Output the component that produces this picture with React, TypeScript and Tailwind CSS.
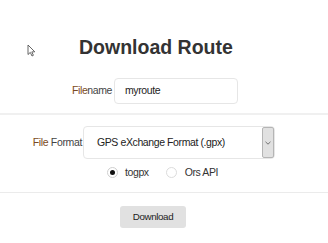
export default function App() {
    return (
        <div
            className="relative h-[243px] w-[328px] overflow-hidden bg-white text-[#444]"
            style={{ fontFamily: '"Liberation Sans", Arial, sans-serif' }}
        >
            {/* mouse pointer */}
            <svg className="absolute left-[27px] top-[44px]" width="9" height="13" viewBox="0 0 9 13">
                <path d="M1 1 L1 10.5 L3.3 8.4 L5 12 L6.4 11.3 L4.8 7.9 L7.8 7.8 Z" fill="#fff" stroke="#555" strokeWidth="0.9" />
            </svg>

            <h1 className="pt-[35px] pl-[79px] text-[19.5px] font-bold leading-[24px] text-[#333]">Download Route</h1>

            <div className="mt-[19px] flex items-center pl-[64px]">
                <label className="w-[48px] whitespace-nowrap text-right text-[10.5px] tracking-[-0.4px]">
                    <span className="text-[#7a4a22]">File</span>name
                </label>
                <div className="ml-[2px] flex h-[26px] w-[124px] items-center rounded-[4px] border border-[#e6e6e6] pl-[10px] text-[10.5px] tracking-[-0.4px] text-[#222]">
                    myroute
                </div>
            </div>

            <div className="mt-[9px] h-[2px] bg-[#f0f0f0]" />

            <div className="mt-[11px] flex items-center pl-[30px]">
                <label className="w-[52px] whitespace-nowrap text-right text-[10.5px] tracking-[-0.35px]">
                    <span className="text-[#7a4a22]">File</span> Format
                </label>
                <div className="ml-[1px] flex h-[33px] w-[192px] items-center rounded-[4px] border border-[#e6e6e6]">
                    <span className="flex-1 whitespace-nowrap pl-[13px] text-[10.5px] tracking-[-0.4px] text-[#222]">GPS eXchange Format (.gpx)</span>
                    <div className="flex h-[31px] w-[12px] items-center justify-center rounded-[2px] border border-[#b5b5b5] bg-[#e1e1e1]">
                        <svg width="6" height="4" viewBox="0 0 6 4">
                            <path d="M0.5 0.8 L3 3.2 L5.5 0.8" fill="none" stroke="#666" strokeWidth="0.9" />
                        </svg>
                    </div>
                </div>
            </div>

            <div className="mt-[6px] flex items-center pl-[107px] text-[10.5px] tracking-[-0.4px] text-[#333]">
                <span className="flex h-[11px] w-[11px] items-center justify-center rounded-full border border-[#cfcfcf]">
                    <span className="h-[5px] w-[5px] rounded-full bg-[#111]" />
                </span>
                <span className="ml-[7px]">togpx</span>
                <span className="ml-[17px] h-[11px] w-[11px] rounded-full border border-[#dcdcdc]" />
                <span className="ml-[8px]">Ors API</span>
            </div>

            <div className="mt-[11px] h-[1px] bg-[#ebebeb]" />

            <div className="mt-[10px] pl-[120px]">
                <button
                    type="button"
                    className="h-[22px] w-[66px] rounded-[3px] bg-[#e1e1e1] text-[9.8px] tracking-[-0.4px] text-[#222]"
                >
                    Download
                </button>
            </div>
        </div>
    )
}
